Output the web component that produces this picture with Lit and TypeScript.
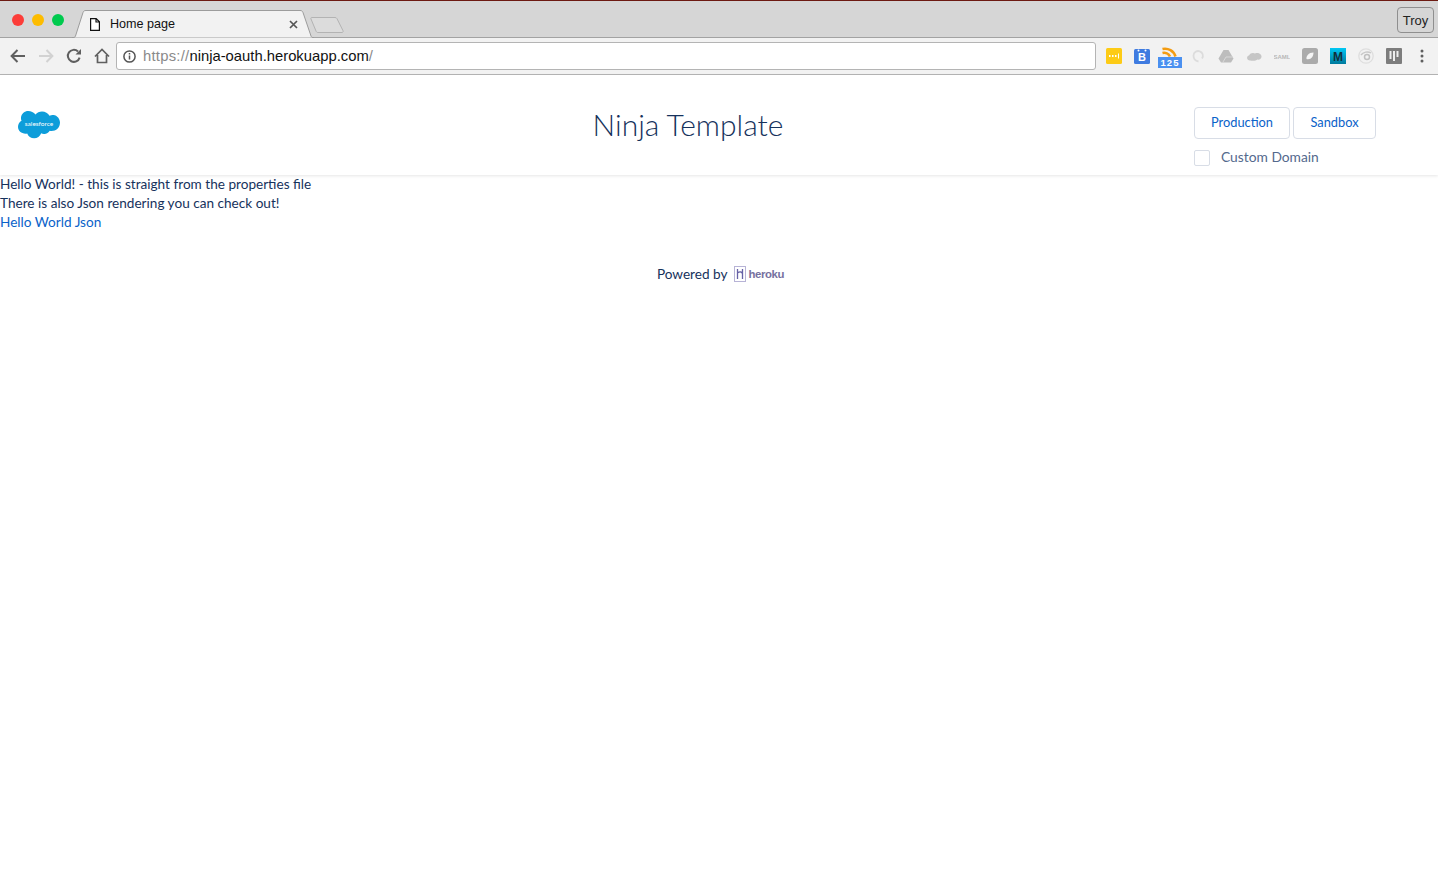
import { LitElement, html, css, svg } from 'lit';
import { customElement } from 'lit/decorators.js';

const backIcon = svg`<svg width="16" height="14" viewBox="0 0 16 14"><path d="M15 7H2M7.500 1 1.600 7l5.900 6" fill="none" stroke="currentColor" stroke-width="2"/></svg>`;
const forwardIcon = svg`<svg width="16" height="14" viewBox="0 0 16 14"><path d="M1 7h13M8.500 1l5.900 6-5.900 6" fill="none" stroke="currentColor" stroke-width="2"/></svg>`;
const reloadIcon = svg`<svg width="16" height="16" viewBox="0 0 16 16"><path d="M13.600 9.600A6 6 0 1 1 12 3.500" fill="none" stroke="currentColor" stroke-width="2"/><path d="M9.500 6.500H15V1z" fill="currentColor"/></svg>`;
const homeIcon = svg`<svg width="16" height="16" viewBox="0 0 16 16"><path d="M1 8.500 8 1.500l7 7M3.500 7v7.500h9V7" fill="none" stroke="currentColor" stroke-width="1.700"/></svg>`;

@customElement('app-root')
export class AppRoot extends LitElement {
  static styles = css`
    :host {
      display: block;
      min-height: 874px;
      background: #fff;
      color: #16325c;
      font-family: "Lato", "Open Sans", sans-serif;
      font-size: 13.6px;
    }

    /* browser frame */
    .tabbar {
      height: 38px;
      box-sizing: border-box;
      display: flex;
      align-items: flex-end;
      background: #d6d6d6;
      border-top: 1px solid #6d1a12;
      border-bottom: 1px solid #a3a3a3;
      font-family: "Liberation Sans", sans-serif;
    }
    .lights {
      display: flex;
      gap: 8px;
      padding-left: 12px;
      align-self: center;
      margin-top: 2px;
    }
    .lights i {
      width: 12px;
      height: 12px;
      border-radius: 50%;
    }
    .red { background: #fc3d39; }
    .amber { background: #fdbc00; }
    .green { background: #00ca4e; }
    .tab {
      position: relative;
      width: 242px;
      height: 28px;
      margin: 0 0 -1px 8px;
      display: flex;
      align-items: center;
      font-size: 12.6px;
      color: #111;
    }
    .tab-shape {
      position: absolute;
      inset: 0;
    }
    .tab-file {
      position: relative;
      margin-left: 18px;
      width: 10px;
      height: 13px;
      display: block;
    }
    .tab-title {
      position: relative;
      margin-left: 10px;
      flex: 1;
    }
    .tab-close {
      position: relative;
      margin-right: 16px;
      display: block;
    }
    .new-tab {
      margin: 0 0 3px -5px;
      display: block;
    }
    .user {
      margin: 0 4px 4px auto;
      width: 37px;
      height: 26px;
      box-sizing: border-box;
      border: 1px solid #8f8f8f;
      border-radius: 4px;
      font-size: 13px;
      color: #222;
      display: flex;
      align-items: center;
      justify-content: center;
    }
    .toolbar {
      height: 37px;
      box-sizing: border-box;
      display: flex;
      align-items: center;
      background: #f2f2f2;
      border-bottom: 1px solid #b5b5b5;
      font-family: "Liberation Sans", sans-serif;
    }
    .nav {
      display: grid;
      grid-template-columns: 28px 28px 28px 16px;
      align-items: center;
      padding-left: 10px;
      width: 106px;
      flex: none;
      color: #5f5f5f;
    }
    .nav svg {
      display: block;
    }
    .nav .off {
      color: #d2d2d2;
    }
    .omnibox {
      width: 980px;
      flex: none;
      height: 28px;
      box-sizing: border-box;
      display: flex;
      align-items: center;
      gap: 7px;
      padding-left: 6px;
      background: #fff;
      border: 1px solid #b4b4b4;
      border-radius: 3px;
      font-size: 14.8px;
      color: #111;
    }
    .omnibox svg {
      display: block;
    }
    .scheme {
      color: #8a8a8a;
      letter-spacing: 0.25px;
    }
    .exts {
      display: flex;
      align-items: center;
      margin-left: 10px;
      gap: 12px;
    }
    .exts > * {
      width: 16px;
      height: 16px;
      flex: none;
      display: block;
    }
    .exts .rss {
      width: 24px;
      height: 22px;
      margin: 4px -4px 0;
    }
    .ext-label {
      font-family: "Liberation Sans", sans-serif;
      font-weight: 700;
    }

    /* page */
    .header {
      height: 100px;
      box-sizing: border-box;
      display: grid;
      grid-template-columns: 1fr auto 1fr;
      padding: 32px 62px 0 0;
      align-items: start;
      box-shadow: 0 1px 3px rgba(0, 0, 0, 0.1);
    }
    .logo {
      display: block;
      margin: 4px 0 0 18px;
    }
    .logo text {
      font-family: "Lato", sans-serif;
    }
    h1 {
      margin: -1px 0 0;
      font-size: 30px;
      font-weight: 300;
      line-height: 36px;
      color: #16325c;
    }
    .auth {
      justify-self: end;
      display: flex;
      flex-direction: column;
      gap: 10px;
    }
    .env {
      display: flex;
      gap: 3px;
    }
    .env button {
      height: 32px;
      padding: 0 0 2px;
      background: #fff;
      border: 1px solid #d8dde6;
      border-radius: 4px;
      color: #0a62c9;
      font: inherit;
      font-size: 12.8px;
    }
    .prod {
      width: 96px;
    }
    .sandbox {
      width: 83px;
    }
    .custom {
      display: flex;
      align-items: center;
      gap: 11px;
      color: #54698d;
      font-size: 13.8px;
      line-height: 16px;
    }
    .custom span {
      padding-bottom: 2px;
    }
    .custom i {
      width: 16px;
      height: 16px;
      box-sizing: border-box;
      border: 1px solid #d8dde6;
      border-radius: 2px;
      background: #fff;
    }
    .body {
      line-height: 19px;
    }
    .body a {
      color: #0a62c9;
      text-decoration: none;
    }
    .powered {
      margin: 33px 0 0 3px;
      display: flex;
      justify-content: center;
      align-items: center;
      gap: 7px;
    }
    .heroku {
      display: flex;
      align-items: center;
      gap: 2px;
      color: #76719f;
      font-family: "Liberation Sans", sans-serif;
      font-size: 11.4px;
      font-weight: 700;
      letter-spacing: -0.4px;
      padding-top: 1px;
    }
    .heroku svg {
      display: block;
    }
  `;

  renderTabbar() {
    return html`
      <div class="tabbar">
        <div class="lights">
          <i class="red"></i>
          <i class="amber"></i>
          <i class="green"></i>
        </div>
        <div class="tab">
          <svg class="tab-shape" width="242" height="28" viewBox="0 0 242 28">
            <path d="M0 27.500h1.500c1 0 1.700-.6 2-1.500L11 2.500C11.500 1 12.500.5 14 .5h214c1.500 0 2.400.5 3 2l8 23.500c.3.900 1 1.500 2 1.500h1" fill="#f2f2f2" stroke="#9c9c9c"/>
          </svg>
          <svg class="tab-file" viewBox="0 0 10 13"><path d="M.6.6h5.600l3.200 3.200v8.600H.6zM6 .6v3.400h3.400" fill="#fff" stroke="#111" stroke-width="1.200"/></svg>
          <span class="tab-title">Home page</span>
          <svg class="tab-close" width="9" height="9" viewBox="0 0 9 9"><path d="M1 1l7 7M8 1 1 8" stroke="#555" stroke-width="1.700"/></svg>
        </div>
        <svg class="new-tab" width="36" height="18" viewBox="0 0 36 18"><path d="M3 1.500h23c1 0 1.500.4 2 1.200l6 12c.4 1 0 1.800-1 1.800H9c-1 0-1.600-.5-2-1.500L2 3c-.4-.9 0-1.500 1-1.500z" fill="#dcdcdc" stroke="#b3b3b3"/></svg>
        <div class="user">Troy</div>
      </div>
    `;
  }

  renderToolbar() {
    return html`
      <div class="toolbar">
        <div class="nav">
          ${backIcon}
          <span class="off">${forwardIcon}</span>
          ${reloadIcon}
          ${homeIcon}
        </div>
        <div class="omnibox">
          <svg width="13" height="13" viewBox="0 0 13 13"><circle cx="6.500" cy="6.500" r="5.600" fill="none" stroke="#555" stroke-width="1.500"/><path d="M6.500 5.500v4M6.500 3v1.500" stroke="#555" stroke-width="1.500"/></svg>
          <span><span class="scheme">https://</span>ninja-oauth.herokuapp.com<span class="scheme">/</span></span>
        </div>
        <div class="exts">
          <svg viewBox="0 0 16 16"><rect width="16" height="16" rx="1.500" fill="#fdcb16"/><path d="M3 8h1.500M6 8h1.500M9 8h1.500" stroke="#fff" stroke-width="2"/><path d="M12.500 5.500v5" stroke="#fff"/></svg>
          <svg viewBox="0 0 16 16"><rect y="1" width="16" height="15" rx="1.500" fill="#3f7be0"/><circle cx="4.500" cy="2.500" r="1" fill="#fff"/><circle cx="11.500" cy="2.500" r="1" fill="#fff"/><text class="ext-label" x="8" y="13" text-anchor="middle" font-size="11" fill="#fff">B</text></svg>
          <svg class="rss" viewBox="0 0 24 22"><path d="M4.500 2a11 11 0 0 1 13 7.500M4.500 6a6.500 6.500 0 0 1 7.500 3.500" fill="none" stroke="#f39c12" stroke-width="2.600"/><rect y="10" width="24" height="11" fill="#4a90f0"/><text class="ext-label" x="12" y="19" text-anchor="middle" font-size="9.500" letter-spacing="1" fill="#fff">125</text></svg>
          <svg viewBox="0 0 16 16"><path d="M8.500 13.500C5.500 13 3.500 10.500 3.500 7.500a4.700 4.700 0 1 1 8.500 3" fill="none" stroke="#dcdcdc" stroke-width="1.800"/></svg>
          <svg viewBox="0 0 16 16"><path d="M5.500 2h5l5 8.500-2.500 4H3L.5 10.500z" fill="#bdbdbd"/><path d="M5 14 8 9h7" fill="none" stroke="#d8d8d8"/></svg>
          <svg viewBox="0 0 16 16"><path d="M4 12.500C.5 12.500.2 8 3 7.500 4 4.500 8 4.500 9 5.500c3-1.500 7 .5 6.500 3.500-.3 2-2.500 3-4 2.500-1.500 1.500-5 1.500-7.500 1z" fill="#c6c6c6"/></svg>
          <svg viewBox="0 0 16 16"><text x="8" y="10.500" text-anchor="middle" font-size="6" font-family="Liberation Sans" font-weight="700" fill="#b8b8b8">SAML</text></svg>
          <svg viewBox="0 0 16 16"><rect width="16" height="16" rx="2.500" fill="#ababab"/><path d="M4.500 11c-.5-3 2-6.500 7-6.500 0 4-2.500 7.500-7 6.500z" fill="#f5f5f5"/></svg>
          <svg viewBox="0 0 16 16"><defs><linearGradient id="m" x1="0" y1="0" x2="0" y2="1"><stop offset="0" stop-color="#00c8f4"/><stop offset="1" stop-color="#007a9d"/></linearGradient></defs><rect width="16" height="16" fill="url(#m)"/><text class="ext-label" x="8" y="13" text-anchor="middle" font-size="12" fill="#12303c">M</text></svg>
          <svg viewBox="0 0 16 16"><circle cx="8" cy="8" r="7.200" fill="none" stroke="#dedede" stroke-width="1.300"/><circle cx="9" cy="9" r="2.500" fill="none" stroke="#c0c0c0" stroke-width="1.500"/><path d="M3 7c2-3 7-4 10-2" fill="none" stroke="#c8c8c8" stroke-width="1.500"/></svg>
          <svg viewBox="0 0 16 16"><rect width="16" height="16" rx="1" fill="#7d7d7d"/><path d="M4.500 3v8M8 3v10M11.500 3v6" stroke="#eee" stroke-width="2"/></svg>
          <svg viewBox="0 0 16 16"><circle cx="8" cy="3" r="1.500" fill="#5f5f5f"/><circle cx="8" cy="8" r="1.500" fill="#5f5f5f"/><circle cx="8" cy="13" r="1.500" fill="#5f5f5f"/></svg>
        </div>
      </div>
    `;
  }

  render() {
    return html`
      ${this.renderTabbar()}
      ${this.renderToolbar()}
      <header class="header">
        <svg class="logo" width="42" height="29" viewBox="0 0 42 29">
          <path d="M17.500 3.500C19 1.500 21.500.5 24 .5c3.300 0 6 1.700 7.500 4.200 1.300-.6 2.700-.9 4-.7 3.800.4 6.500 4 6.500 7.500 0 5-3.800 8.500-8.500 8.500-.6 0-1.200 0-1.800-.2-1.100 2.100-3.400 3.400-5.800 3.200-1 0-1.900-.3-2.700-.7-1.100 3-4 5-7 5-3.300 0-6-2-7-4.800-.5.100-1 .2-1.600.2C3.200 22.700 0 19.700 0 15.800c0-2.600 1.400-4.800 3.500-6C3 8.700 2.800 7.500 3 6.300 3.500 2.700 6.700 0 10.200 0c2.900 0 5.500 1.400 7.300 3.500z" fill="#0d9dda"/>
          <text x="21" y="14.500" text-anchor="middle" font-size="6.500" fill="#fff">salesforce</text>
        </svg>
        <h1>Ninja Template</h1>
        <div class="auth">
          <div class="env">
            <button class="prod">Production</button>
            <button class="sandbox">Sandbox</button>
          </div>
          <label class="custom"><i></i><span>Custom Domain</span></label>
        </div>
      </header>
      <div class="body">
        <div>Hello World! - this is straight from the properties file</div>
        <div>There is also Json rendering you can check out!</div>
        <a href="#">Hello World Json</a>
      </div>
      <div class="powered">
        <span>Powered by</span>
        <span class="heroku">
          <svg width="12" height="16" viewBox="0 0 12 16"><rect x=".5" y=".5" width="11" height="15" fill="#fff" stroke="#b7b3d6"/><path d="M3.500 3v10M8.500 3v10M3.500 7c2-1.500 5-1.500 5 1" fill="none" stroke="#6762a6" stroke-width="1.300"/></svg>
          heroku
        </span>
      </div>
    `;
  }
}
